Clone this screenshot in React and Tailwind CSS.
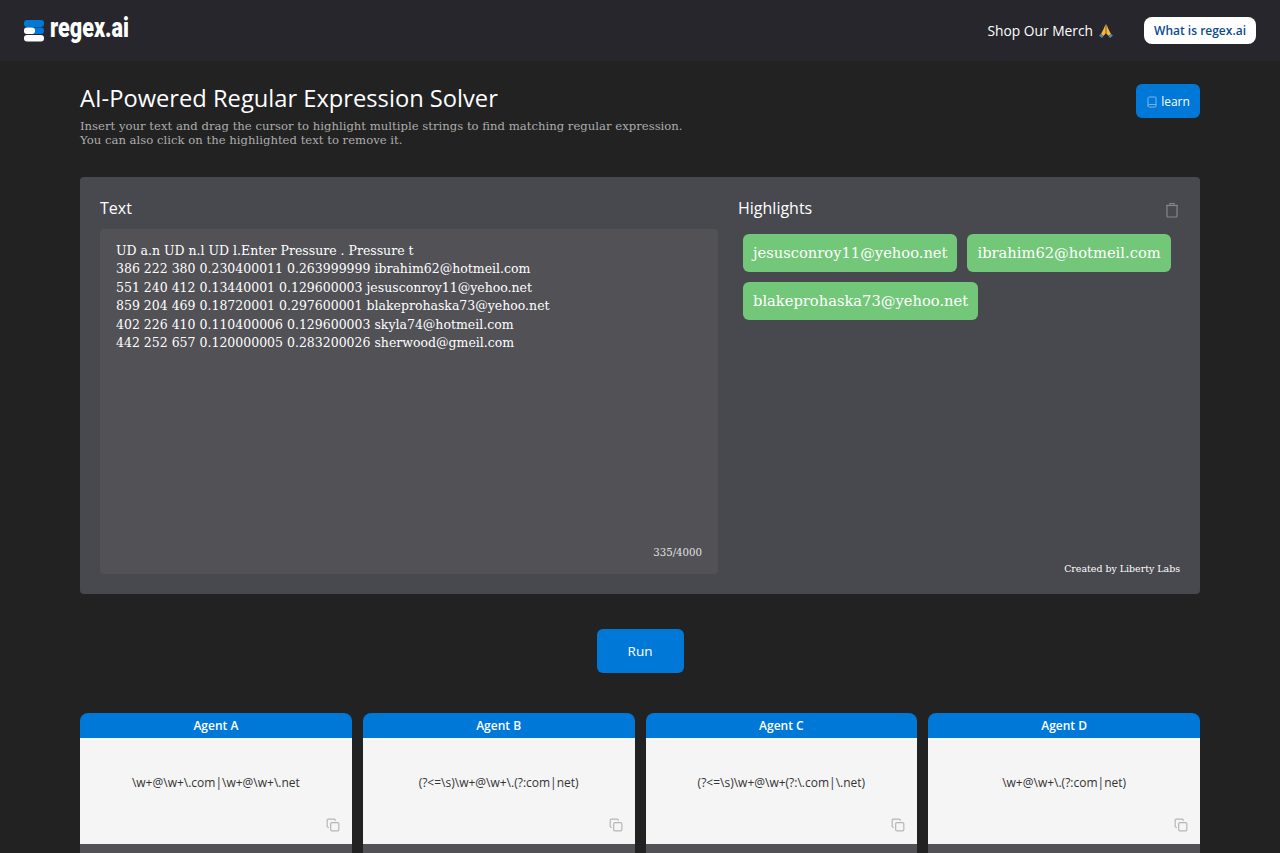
import React from 'react';
import { Book, Copy } from 'lucide-react';

const serif = "font-['DejaVu_Serif',serif]";

const agents = [
  { name: 'Agent A', regex: '\\w+@\\w+\\.com|\\w+@\\w+\\.net' },
  { name: 'Agent B', regex: '(?<=\\s)\\w+@\\w+\\.(?:com|net)' },
  { name: 'Agent C', regex: '(?<=\\s)\\w+@\\w+(?:\\.com|\\.net)' },
  { name: 'Agent D', regex: '\\w+@\\w+\\.(?:com|net)' },
];

const lines = [
  'UD a.n UD n.l UD l.Enter Pressure . Pressure t',
  '386 222 380 0.230400011 0.263999999 ibrahim62@hotmeil.com',
  '551 240 412 0.13440001 0.129600003 jesusconroy11@yehoo.net',
  '859 204 469 0.18720001 0.297600001 blakeprohaska73@yehoo.net',
  '402 226 410 0.110400006 0.129600003 skyla74@hotmeil.com',
  '442 252 657 0.120000005 0.283200026 sherwood@gmeil.com',
];

const highlights = ['jesusconroy11@yehoo.net', 'ibrahim62@hotmeil.com', 'blakeprohaska73@yehoo.net'];

const Logo = () => (
  <svg width="21" height="22" viewBox="0 0 21 22" className="mr-[5px]">
    <rect x="0" y="0" width="20" height="7" rx="3" fill="#0078d7" />
    <rect x="0" y="7.5" width="20" height="6.5" rx="3" fill="#0078d7" />
    <rect x="0" y="7.5" width="11" height="6.5" rx="3" fill="#ffffff" />
    <rect x="0" y="15" width="20" height="6.5" rx="3" fill="#ffffff" />
  </svg>
);

const Pray = () => (
  <svg width="16" height="16" viewBox="0 0 16 16" className="ml-[5px]">
    <path d="M7.7 1 L7.7 10.5 L5.2 13 L3 11 L5.6 6 Z" fill="#f5b83d" />
    <path d="M8.3 1 L8.3 10.5 L10.8 13 L13 11 L10.4 6 Z" fill="#f5b83d" />
    <path d="M1 12.6 L2.8 11 L5.4 13.2 L4 15 Z" fill="#4a90b8" />
    <path d="M15 12.6 L13.2 11 L10.6 13.2 L12 15 Z" fill="#4a90b8" />
  </svg>
);

const Trash = () => (
  <svg width="14" height="16" viewBox="0 0 14 16" fill="none" stroke="#85858a" strokeWidth="1.2">
    <path d="M2 3.5h10v10.5a1 1 0 0 1-1 1H3a1 1 0 0 1-1-1z" />
    <path d="M1 3.5h12" />
    <path d="M5 3.5V1.5h4v2" />
  </svg>
);

export default function App() {
  return (
    <div className="h-[853px] overflow-hidden bg-[#222222] font-['Open_Sans',sans-serif] text-white">
      <header className="flex h-[61px] items-center justify-between bg-[#26262c] pl-6 pr-6">
        <div className="flex items-center">
          <Logo />
          <span className="origin-left scale-x-[0.77] pb-[5px] font-['Roboto',sans-serif] text-[28px] font-black leading-none">regex.ai</span>
        </div>
        <div className="flex items-center">
          <span className="flex items-center pt-px text-[13.8px]">Shop Our Merch<Pray /></span>
          <button className="ml-[30px] h-[27px] rounded-lg bg-white px-[10px] text-xs font-semibold text-[#0b4a8f]">What is regex.ai</button>
        </div>
      </header>

      <main className="mx-auto w-[1120px]">
        <div className="flex items-start justify-between pt-[21px]">
          <div>
            <h1 className="text-[23.7px] leading-[32px]">AI-Powered Regular Expression Solver</h1>
            <p className={`${serif} mt-[6px] text-[11.67px] leading-[13.5px] text-[#adadad]`}>
              Insert your text and drag the cursor to highlight multiple strings to find matching regular expression.
              <br />
              You can also click on the highlighted text to remove it.
            </p>
          </div>
          <button className="mt-[2px] flex h-[34px] w-16 items-center justify-center gap-[3px] rounded-md bg-[#0078d7] pt-px text-xs">
            <Book size={12} className="text-[#74b6ec]" />
            learn
          </button>
        </div>

        <section className="mt-[30px] grid h-[417px] grid-cols-[618px_1fr] gap-5 rounded bg-[#48484f] p-5">
          <div className="flex flex-col">
            <h2 className="text-base leading-[22px]">Text</h2>
            <div className={`${serif} mt-[10px] flex flex-1 flex-col justify-between rounded bg-[#515156] px-4 pb-[14px] pt-[13px] text-[12.5px] leading-[18.4px]`}>
              <div className="whitespace-pre">
                {lines.map((line) => (
                  <div key={line}>{line}</div>
                ))}
              </div>
              <div className="self-end text-[10.2px] leading-[14px] text-[#e0e0e0]">335/4000</div>
            </div>
          </div>
          <div className="flex flex-col">
            <div className="flex items-start justify-between">
              <h2 className="text-base leading-[22px]">Highlights</h2>
              <span className="mr-[1px] mt-[5px]"><Trash /></span>
            </div>
            <div className="mt-[15px] flex flex-wrap gap-[10px] pl-[5px]">
              {highlights.map((h) => (
                <span key={h} className={`${serif} flex h-[38px] items-center rounded-md bg-[#73c779] px-[10px] text-[14.7px]`}>{h}</span>
              ))}
            </div>
            <div className={`${serif} mb-[-2px] mt-auto text-right text-[9.43px] leading-[14px]`}>Created by Liberty Labs</div>
          </div>
        </section>

        <div className="mt-[35px] flex justify-center">
          <button className="h-[44px] w-[87px] rounded-md bg-[#0078d7] pt-px text-[13.5px]">Run</button>
        </div>

        <div className="mt-10 grid grid-cols-4 gap-[11px]">
          {agents.map((a) => (
            <div key={a.name} className="overflow-hidden rounded-t-lg">
              <div className="flex h-[25px] items-center justify-center bg-[#0078d7] text-xs font-semibold">{a.name}</div>
              <div className="relative flex h-[106px] items-center justify-center bg-[#f5f5f5] pb-4 text-xs text-[#333333]">
                {a.regex}
                <Copy size={14} className="absolute bottom-[12px] right-3 text-[#b5b5b5]" />
              </div>
              <div className="h-10 bg-[#515156]" />
            </div>
          ))}
        </div>
      </main>
    </div>
  );
}
